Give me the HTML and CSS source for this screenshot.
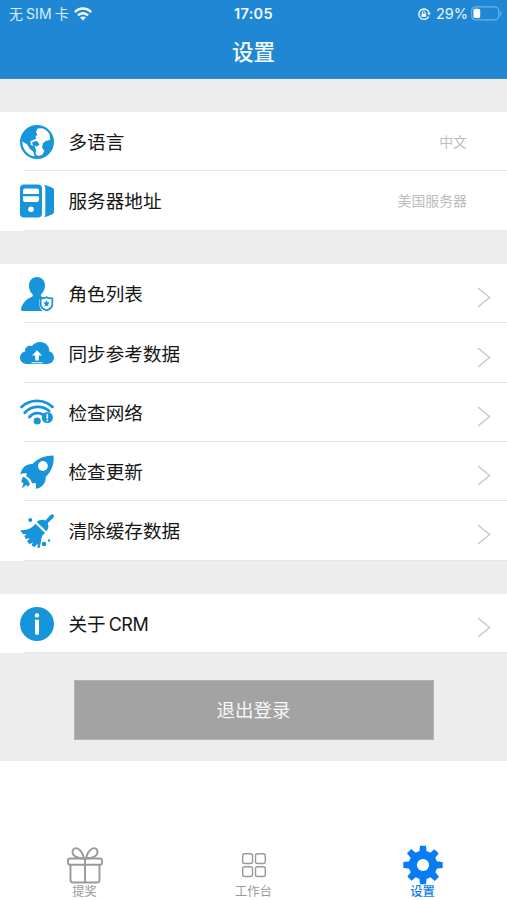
FILE: index.html
```
<!DOCTYPE html>
<html lang="zh-CN">
<head>
<meta charset="utf-8">
<meta name="viewport" content="width=device-width, initial-scale=1">
<title>设置</title>
<link rel="stylesheet" href="styles.css">
</head>
<body>
<svg width="0" height="0" class="defs" aria-hidden="true">
  <symbol id="chevron" viewBox="0 0 14 21"><path d="M1 1 12.500 10.500 1 20" fill="none" stroke="currentColor" stroke-width="1.500"/></symbol>
</svg>
<header class="header">
  <div class="status">
    <div class="status-left">
      <span class="carrier">无<span class="sim">SIM</span>卡</span>
      <svg class="wifi" viewBox="0 0 18 14" fill="none" stroke="currentColor" stroke-width="2.500"><path d="M.9 5.200C5.400.4 12.600.4 17.100 5.200M4 8.400c2.900-3 7.100-3 10 0"/><path d="M9 13.500 6.100 10.600c1.600-1.600 4.200-1.600 5.800 0z" fill="currentColor" stroke="none"/></svg>
    </div>
    <div class="clock">17:05</div>
    <div class="status-right">
      <svg class="lock" viewBox="0 0 14 14" fill="none" stroke="currentColor"><path d="M11.700 9.500a5.200 5.200 0 1 1 .4-3.600" stroke-width="1.400"/><path d="M10 5.700h3.800L12 8.500z" fill="currentColor" stroke="none"/><path d="M4.500 6.500h4.600v3.400H4.500z" fill="currentColor" stroke="none"/><path d="M5.500 6.800V5.200a1.300 1.300 0 0 1 2.600 0v1.600"/></svg>
      <span class="percent">29%</span>
      <svg class="battery" viewBox="0 0 31 15"><rect x=".7" y=".9" width="27" height="13" rx="3.800" fill="none" stroke="#69b3ea" stroke-width="1.200"/><rect x="2.500" y="2.700" width="6.700" height="9.400" rx="1.600" fill="#fff"/><path d="M29 5v5c2-.8 2-4.200 0-5z" fill="#69b3ea"/></svg>
    </div>
  </div>
  <h1 class="title">设置</h1>
</header>
<main class="content">
  <section class="group">
    <div class="row">
      <svg class="icon" viewBox="0 0 34 34"><circle cx="17" cy="17" r="17"/><path d="M17.500 3.500 16 7l1.500 3-2 1 .5 2.500-2.500 1.500-3 1 .3 4 4 1.200L16 25l-.5 4 2.500 2 4-1 2.500-4-2.500-3.500.8-4 3-2.500 4.500-1.200L29.500 9C27.500 6 25 4.200 22 3.300zM2.300 16.500 7 19.300l2.800 4.500 3.400 2.700 1.500 5C8 30.500 2.500 25 2.300 16.500z" fill="#fff"/><path d="m12 17.500 3.500-1.500 2 .5 2 3-2.500 2-4-1z"/></svg>
      <span class="label">多语言</span><span class="value">中文</span>
    </div>
    <div class="row">
      <svg class="icon" viewBox="0 0 34 34"><rect x="0" y=".5" width="22" height="33" rx="4"/><path d="M24.300.7 32 3.500q2 .8 2 2.800v21.400q0 2-2 2.800l-7.700 2.900q1-1.500 1-3.500V4.500q0-2-1-3.800z"/><path d="M5 4.500h12q2 0 2 2V10H3V6.500q0-2 2-2zM3 12.300h16V16q0 2-2 2H5q-2 0-2-2z" fill="#fff"/><circle cx="11" cy="25.300" r="2.800" fill="#fff"/></svg>
      <span class="label">服务器地址</span><span class="value">美国服务器</span>
    </div>
  </section>
  <section class="group">
    <div class="row">
      <svg class="icon" viewBox="0 0 34 34"><path d="M17 0c5 0 8 3.700 8 8.500 0 3.500-1.500 6.800-4 8.800v1.500c0 1 2 1.500 4.500 1.700L19.500 22v6c0 2.500 1.500 4.500 3 6H3c-2 0-2.500-1.500-1.500-4C3.500 25 7 21.500 11.500 20c1.500-.5 1.700-1.500 1-2.700C10 15 9 12 9 8.500 9 3.700 12 0 17 0z"/><path d="M26.500 20.200c1.800 1.300 3.700 1.400 5.800 1.200v6.100c0 2.700-2 4.500-5.800 6-3.800-1.500-5.800-3.300-5.800-6v-6.100c2.100.2 4 .1 5.800-1.200z" fill="#fff" stroke="currentColor" stroke-width="1.700"/><path d="m26.500 23.300 1 2 2.200.3-1.600 1.600.4 2.200-2-1-2 1 .4-2.200-1.600-1.600 2.200-.3z"/></svg>
      <span class="label">角色列表</span><svg class="chevron"><use href="#chevron"/></svg>
    </div>
    <div class="row">
      <svg class="icon" viewBox="0 0 34 34"><path d="M7.500 28C3.200 28 0 25.500 0 21.700 0 18.500 2.200 16 5.200 15.500c-.8-4.300 3.300-7 6.800-5.400C13.500 7.700 16.500 6 20 6c5.500 0 9.500 4 9.300 9.200C32 16 34 18.500 34 21.500c0 3.700-3 6.500-7 6.500z"/><path d="m17 14.200 5 5.300h-3.200v4.900h-3.600v-4.900H12zM11.500 26.300h11v.9h-11z" fill="#fff"/></svg>
      <span class="label">同步参考数据</span><svg class="chevron"><use href="#chevron"/></svg>
    </div>
    <div class="row">
      <svg class="icon" viewBox="0 0 34 34"><g fill="none" stroke="currentColor" stroke-width="2.800" stroke-linecap="round"><path d="M1.500 12C9.700 3.800 24.300 3.800 32.500 12M4.800 17.700c6.500-7.300 17.700-7.500 24.300-1.700M9.500 22c3.500-4.300 9-5 13.200-2.500"/></g><circle cx="17.200" cy="26" r="3.600"/><circle cx="27.300" cy="22.500" r="5.600"/><path d="M26.500 18.700h1.600v5h-1.600zm0 6h1.600v1.500h-1.600z" fill="#fff"/></svg>
      <span class="label">检查网络</span><svg class="chevron"><use href="#chevron"/></svg>
    </div>
    <div class="row">
      <svg class="icon" viewBox="0 0 34 34"><path d="M33.500.5C25 .5 18 3.200 12.500 9 7 8.500 2 12 .2 19.300c2.500-1.100 4.800-1.300 6.600-.9l-.6 3.100c2.800.7 5 3.600 5.800 6.800l3.500-.4c.6 2 .8 4 .2 6.100 7-1.500 10.500-6.500 10-12C31.500 16 34.500 9 33.500.5z"/><circle cx="22.900" cy="11" r="4.900" fill="#fff"/><path d="M3.200 21.800c2.500.7 5.800 4 6.800 7.500-.8 1.200-1.800 2-2.800 2.200l-.8-1.700L2 33.500l1.500-5.300-2-1c-.1-2 .5-3.900 1.700-5.400z"/></svg>
      <span class="label">检查更新</span><svg class="chevron"><use href="#chevron"/></svg>
    </div>
    <div class="row">
      <svg class="icon" viewBox="0 0 34 34"><path d="M25.500 6.500 30.800.8c2-1.600 4.200.7 2.700 2.700l-5.800 5.700c1.300 3.300.7 5.800-1.400 8L16.800 8c2.300-2.200 5.300-2.800 8.700-1.500z"/><path d="m15.500 9.800 9.800 9.500c-3.300 1.300-4 4.500-4.500 9.500l-1.300 5.200-2.200-.2.700-4.300-3.500 3.500-3-1.500 1.500-3.300-3.400 2-2.600-2.900 3-3.300-4.200 1L4.300 22l2.500-1.900-3.800-.1L0 16.500C5.500 16.300 11.500 15.300 15.500 9.800z"/><circle cx="10.300" cy="6" r="2"/><circle cx="24" cy="30" r="2.300"/><circle cx="29" cy="26.500" r="1.200"/></svg>
      <span class="label">清除缓存数据</span><svg class="chevron"><use href="#chevron"/></svg>
    </div>
  </section>
  <section class="group">
    <div class="row">
      <svg class="icon" viewBox="0 0 34 34"><circle cx="17" cy="17" r="17"/><circle cx="17" cy="8.400" r="2.200" fill="#fff"/><path d="M14.300 12.700H19v13.500q0 1.600-2 1.600t-2-1.600V13.800z" fill="#fff"/></svg>
      <span class="label">关于<span class="latin">CRM</span></span><svg class="chevron"><use href="#chevron"/></svg>
    </div>
  </section>
  <button class="logout" type="button">退出登录</button>
</main>
<nav class="tabs">
  <a class="tab"><svg class="tab-icon" viewBox="0 0 40 40" fill="none" stroke="currentColor" stroke-width="1.900"><rect x="3" y="13.500" width="34" height="6.200" rx="2"/><path d="M5.500 20v15q0 2.500 2.500 2.500h24q2.500 0 2.500-2.500V20M20 13.500v24M19 13.500C10 13 6 9.500 8 5c3-5 9.500 1 11 8.500zM21 13.500C30 13 34 9.500 32 5c-3-5-9.500 1-11 8.500z"/></svg><span>提奖</span></a>
  <a class="tab"><svg class="tab-icon" viewBox="0 0 40 40" fill="none" stroke="currentColor" stroke-width="1.400"><rect x="8.700" y="8.700" width="9.800" height="9.800" rx="2"/><rect x="21.500" y="8.700" width="9.800" height="9.800" rx="2"/><rect x="8.700" y="21.700" width="9.800" height="9.800" rx="2"/><rect x="21.500" y="21.700" width="9.800" height="9.800" rx="2"/></svg><span>工作台</span></a>
  <a class="tab active"><svg class="tab-icon" viewBox="0 0 40 40"><g fill="currentColor"><circle cx="20" cy="20" r="14.300"/><path id="teeth" d="M17 .8h6l.7 7h-7.400zM17 39.200h6l.7-7h-7.400zM.3 17v6l7 .7v-7.400zM39.700 17v6l-7 .7v-7.400z"/><use href="#teeth" transform="rotate(45 20 20)"/></g><circle cx="20" cy="20" r="6.100" fill="#fff"/></svg><span>设置</span></a>
</nav>
</body>
</html>
```
FILE: styles.css
```
* { box-sizing: border-box; }
body {
  margin: 0;
  height: 900px;
  display: flex;
  flex-direction: column;
  overflow: hidden;
  background: #fff;
  color: #161616;
  font-family: Inter, "Noto Sans CJK SC", sans-serif;
}
.defs { position: absolute; }
.header {
  height: 79px;
  background: #2087d5;
  border-bottom: 1px solid #3d86bd;
  color: #f4fbff;
}
.status {
  height: 27px;
  display: grid;
  grid-template-columns: 1fr auto 1fr;
  align-items: center;
  padding: 0 5px 0 5px;
  font-size: 14px;
}
.status-left, .status-right { display: flex; align-items: center; }
.status-left { padding-left: 4px; }
.status-right { justify-content: flex-end; }
.carrier { color: #d9efff; line-height: 20px; }
.sim { margin: 0 3px; letter-spacing: .1px; }
.wifi { width: 18px; height: 14px; margin-left: 5px; }
.clock { font-size: 14.500px; font-weight: 600; letter-spacing: .3px; }
.lock { width: 14px; height: 14px; margin-right: 5px; }
.percent { font-size: 14.500px; color: #e5f5ff; margin-right: 3px; }
.battery { width: 31px; height: 15px; }
.title {
  margin: 9px 0 0;
  font-size: 21.500px;
  line-height: 32px;
  font-weight: 500;
  text-align: center;
}
.content {
  height: 682px;
  padding-top: 33px;
  background: #ededed;
}
.group { margin-bottom: 33.500px; background: #fff; }
.row {
  height: 59.300px;
  display: flex;
  align-items: center;
  padding: 0 16px 0 19.500px;
  background: linear-gradient(#e7e7e7, #e7e7e7) 24px 100% / 100% 1px no-repeat;
}
.icon {
  width: 34px;
  height: 34px;
  flex: none;
  margin-right: 15px;
  fill: currentColor;
  color: #1695db;
}
.label { flex: 1; font-size: 18.600px; line-height: 28px; padding-top: 1px; }
.latin { margin-left: 3px; font-size: 18px; letter-spacing: -.5px; }
.value { font-size: 13.900px; color: #bcbcbc; margin-right: 24px; padding-bottom: 1px; }
.chevron { width: 14px; height: 21px; color: #c9c9c9; margin-top: 8px; }
.logout {
  display: block;
  width: 360px;
  height: 60px;
  margin: -6.500px auto 0;
  padding: 0 0 2px;
  border: 1px solid #b3b3b3;
  background: #a3a3a3;
  color: #f7f7f7;
  font: 18.500px Inter, "Noto Sans CJK SC", sans-serif;
}
.tabs {
  flex: 1;
  display: grid;
  grid-template-columns: repeat(3, 1fr);
  align-items: end;
}
.tab {
  display: flex;
  flex-direction: column;
  align-items: center;
  color: #999;
  font-size: 12.300px;
  line-height: 16px;
}
.tab-icon { width: 40px; height: 40px; margin-bottom: -.5px; }
.active { color: #0a7cf3; }
.active span { font-weight: 500; }
```
